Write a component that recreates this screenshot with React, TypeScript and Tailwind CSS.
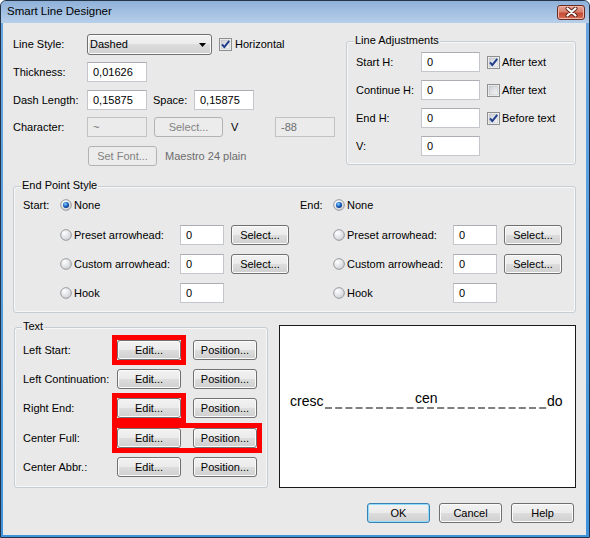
import React from "react";

// Win7 style dialog: "Smart Line Designer"

function Button({
  label,
  className = "",
  disabled = false,
  isDefault = false,
}: {
  label: string;
  className?: string;
  disabled?: boolean;
  isDefault?: boolean;
}) {
  const look = disabled
    ? "border-[#b3b3b3] bg-[#ececec] text-[#838383]"
    : isDefault
      ? "border-[#3c7fb1] bg-[linear-gradient(to_bottom,#f2f2f2_0%,#ebebeb_49%,#dddddd_50%,#cfcfcf_100%)] text-black shadow-[inset_0_0_0_1px_#8fdcfb]"
      : "border-[#707070] bg-[linear-gradient(to_bottom,#f2f2f2_0%,#ebebeb_49%,#dddddd_50%,#cfcfcf_100%)] text-black shadow-[inset_0_0_0_1px_#fbfbfb]";
  return (
    <button
      className={`flex h-[20px] shrink-0 items-center justify-center rounded-[3px] border leading-none ${look} ${className}`}
    >
      {label}
    </button>
  );
}

function Field({
  value,
  className = "",
  disabled = false,
}: {
  value: string;
  className?: string;
  disabled?: boolean;
}) {
  return (
    <div
      className={`flex h-[20px] shrink-0 items-center border pl-[5px] leading-none ${
        disabled
          ? "border-[#c2c2c2] bg-[#ebebeb] text-[#6d6d6d]"
          : "border-[#c3c7cc] border-t-[#abadb3] bg-white text-black"
      } ${className}`}
    >
      {value}
    </div>
  );
}

function Check({ checked }: { checked: boolean }) {
  return (
    <svg width="13" height="13" viewBox="0 0 13 13" className="shrink-0">
      <defs>
        <linearGradient id="cbg" x1="0" y1="0" x2="1" y2="1">
          <stop offset="0" stopColor="#cbcfd5" />
          <stop offset="1" stopColor="#f6f6f6" />
        </linearGradient>
      </defs>
      <rect x="0.5" y="0.5" width="12" height="12" fill="#fff" stroke="#8e8f8f" />
      <rect x="2" y="2" width="9" height="9" fill="url(#cbg)" stroke="#b2b4b8" strokeWidth="0.6" />
      {checked && (
        <path
          d="M3 6.3 L5.3 9.2 L10.2 2.8"
          fill="none"
          stroke="#203c8c"
          strokeWidth="1.9"
          strokeLinejoin="round"
        />
      )}
    </svg>
  );
}

function Radio({ checked = false }: { checked?: boolean }) {
  return (
    <svg width="12" height="12" viewBox="0 0 13 13" className="shrink-0">
      <defs>
        <radialGradient id="rbg" cx="0.35" cy="0.3" r="0.8">
          <stop offset="0" stopColor="#ffffff" />
          <stop offset="1" stopColor="#c9ccd1" />
        </radialGradient>
        <radialGradient id="rdot" cx="0.4" cy="0.35" r="0.7">
          <stop offset="0" stopColor="#8fd3ff" />
          <stop offset="0.55" stopColor="#1b64c4" />
          <stop offset="1" stopColor="#0b2f73" />
        </radialGradient>
      </defs>
      <circle cx="6.5" cy="6.5" r="5.8" fill="url(#rbg)" stroke="#8a8c90" strokeWidth="0.9" />
      {checked && <circle cx="6.5" cy="6.5" r="3.3" fill="url(#rdot)" />}
    </svg>
  );
}

// red annotation frame around a control, kept out of the layout by negative margins
function Marked({ children }: { children: React.ReactNode }) {
  return <div className="-m-[5px] flex border-[5px] border-[#ff0000]">{children}</div>;
}

function Group({
  title,
  className = "",
  children,
}: {
  title: string;
  className?: string;
  children: React.ReactNode;
}) {
  return (
    <div
      className={`relative rounded-[3px] border border-[#c6cdd3] shadow-[inset_0_0_0_1px_#f7f7f7] ${className}`}
    >
      <span className="absolute -top-[8px] left-[7px] bg-[#e9e9e9] px-[1px] leading-[13px]">
        {title}
      </span>
      {children}
    </div>
  );
}

function EndPoint({ label, labelClass }: { label: string; labelClass: string }) {
  return (
    <div className="flex">
      <div className={`flex h-[20px] items-center ${labelClass}`}>{label}</div>
      <div className="flex flex-col">
        <div className="flex h-[20px] items-center">
          <Radio checked />
          <span className="ml-[2px]">None</span>
        </div>
        <div className="mt-[10px] flex h-[20px] items-center">
          <Radio />
          <span className="ml-[2px] w-[106px]">Preset arrowhead:</span>
          <Field value="0" className="w-[44px]" />
          <Button label="Select..." className="ml-[7px] w-[58px]" />
        </div>
        <div className="mt-[9px] flex h-[20px] items-center">
          <Radio />
          <span className="ml-[2px] w-[106px]">Custom arrowhead:</span>
          <Field value="0" className="w-[44px]" />
          <Button label="Select..." className="ml-[7px] w-[58px]" />
        </div>
        <div className="mt-[9px] flex h-[20px] items-center">
          <Radio />
          <span className="ml-[2px] w-[106px]">Hook</span>
          <Field value="0" className="w-[44px]" />
        </div>
      </div>
    </div>
  );
}

const adjustments: { label: string; check: boolean | null; text: string }[] = [
  { label: "Start H:", check: true, text: "After text" },
  { label: "Continue H:", check: false, text: "After text" },
  { label: "End H:", check: true, text: "Before text" },
  { label: "V:", check: null, text: "" },
];

const textRows = ["Left Start:", "Left Continuation:", "Right End:", "Center Full:", "Center Abbr.:"];

export default function App() {
  return (
    <div className="flex h-[538px] w-[590px] flex-col overflow-hidden rounded-t-[6px] border border-[#243448] bg-[linear-gradient(to_bottom,#6aa6e0,#3f93db)] font-['Liberation_Sans',Arial,sans-serif] text-[11px] text-black">
      {/* title bar */}
      <div className="flex h-[22px] shrink-0 items-center bg-[linear-gradient(to_bottom,#8fb1d9,#b6cfea)] pl-[6px] pr-[4px]">
        <span className="text-[11.5px]">Smart Line Designer</span>
        <div className="ml-auto flex h-[15px] w-[28px] items-center justify-center rounded-[3px] border border-[#6a2a22] bg-[linear-gradient(to_bottom,#e8a596_0%,#d7806d_45%,#c64a33_55%,#d37058_100%)] shadow-[inset_0_0_0_1px_#f0b6a8]">
          <svg width="13" height="10" viewBox="0 0 13 10">
            <path d="M2.5 1.5 L10.5 8.5 M10.5 1.5 L2.5 8.5" stroke="#5a1f16" strokeWidth="4" strokeLinecap="round" />
            <path d="M2.5 1.5 L10.5 8.5 M10.5 1.5 L2.5 8.5" stroke="#ffffff" strokeWidth="2.2" strokeLinecap="round" />
          </svg>
        </div>
      </div>

      {/* body */}
      <div className="mb-[2px] ml-[2px] mr-[3px] flex flex-1 flex-col bg-[#e9e9e9]">
        {/* top section */}
        <div className="flex items-start px-[10px]">
          <div className="mt-[11px] flex flex-col">
            <div className="flex h-[21px] items-center">
              <span className="w-[74px]">Line Style:</span>
              <div className="flex h-[21px] w-[125px] items-center rounded-[3px] border border-[#707070] bg-[linear-gradient(to_bottom,#f2f2f2_0%,#ebebeb_49%,#dddddd_50%,#cfcfcf_100%)] pl-[2px] pr-[5px] shadow-[inset_0_0_0_1px_#fbfbfb]">
                <span>Dashed</span>
                <svg width="7" height="4" viewBox="0 0 7 4" className="ml-auto">
                  <polygon points="0,0 7,0 3.5,4" fill="#000" />
                </svg>
              </div>
              <div className="ml-[7px] flex items-center">
                <Check checked />
                <span className="ml-[3px]">Horizontal</span>
              </div>
            </div>
            <div className="mt-[7px] flex h-[20px] items-center">
              <span className="w-[74px]">Thickness:</span>
              <Field value="0,01626" className="w-[60px]" />
            </div>
            <div className="mt-[8px] flex h-[20px] items-center">
              <span className="w-[74px]">Dash Length:</span>
              <Field value="0,15875" className="w-[60px]" />
              <span className="ml-[6px] w-[41px]">Space:</span>
              <Field value="0,15875" className="w-[60px]" />
            </div>
            <div className="mt-[7px] flex h-[20px] items-center">
              <span className="w-[74px]">Character:</span>
              <Field value="~" disabled className="w-[60px]" />
              <Button label="Select..." disabled className="ml-[7px] w-[69px]" />
              <span className="ml-[8px] w-[44px]">V</span>
              <Field value="-88" disabled className="w-[60px]" />
            </div>
            <div className="mt-[9px] flex h-[20px] items-center pl-[75px]">
              <Button label="Set Font..." disabled className="w-[69px]" />
              <span className="ml-[8px] text-[#6d6d6d]">Maestro 24 plain</span>
            </div>
          </div>

          <Group title="Line Adjustments" className="ml-auto mt-[18px] w-[230px] pb-[8px] pl-[9px] pt-[10px]">
            <div className="flex flex-col gap-[8px]">
              {adjustments.map((a) => (
                <div key={a.label} className="flex h-[20px] items-center">
                  <span className="w-[65px]">{a.label}</span>
                  <Field value="0" className="w-[59px]" />
                  {a.check !== null && (
                    <div className="ml-[7px] flex items-center">
                      <Check checked={a.check} />
                      <span className="ml-[2px]">{a.text}</span>
                    </div>
                  )}
                </div>
              ))}
            </div>
          </Group>
        </div>

        {/* end point style */}
        <Group title="End Point Style" className="mx-[10px] mt-[20px] flex pb-[9px] pl-[9px] pt-[8px]">
          <div className="w-[277px]">
            <EndPoint label="Start:" labelClass="w-[37px]" />
          </div>
          <EndPoint label="End:" labelClass="w-[33px]" />
        </Group>

        {/* text + preview */}
        <div className="mt-[12px] flex items-start">
          <Group title="Text" className="ml-[11px] mt-[2px] w-[254px] pb-[10px] pl-[8px] pt-[12px]">
            <div className="flex flex-col">
              {textRows.map((r, i) => (
                <div
                  key={r}
                  className={`flex h-[20px] items-center ${i === 0 ? "" : i === 3 ? "mt-[10px]" : "mt-[9px]"}`}
                >
                  <span className="w-[94px]">{r}</span>
                  {i === 3 ? (
                    <Marked>
                      <Button label="Edit..." className="w-[64px]" />
                      <Button label="Position..." className="ml-[12px] w-[64px]" />
                    </Marked>
                  ) : (
                    <>
                      {i === 0 || i === 2 ? (
                        <Marked>
                          <Button label="Edit..." className="w-[64px]" />
                        </Marked>
                      ) : (
                        <Button label="Edit..." className="w-[64px]" />
                      )}
                      <Button label="Position..." className="ml-[12px] w-[64px]" />
                    </>
                  )}
                </div>
              ))}
            </div>
          </Group>

          <div className="ml-[11px] h-[163px] w-[297px] border border-[#1a1a1a] bg-white">
            <svg width="295" height="161" viewBox="0 0 295 161">
              <line x1="45" y1="82" x2="267" y2="82" stroke="#000" strokeWidth="1" strokeDasharray="7 3.2" />
              <text x="10" y="80" fontFamily="Liberation Sans, Arial, sans-serif" fontSize="14" fill="#000">
                cresc
              </text>
              <text x="135" y="77" fontFamily="Liberation Sans, Arial, sans-serif" fontSize="14" fill="#000">
                cen
              </text>
              <text x="267" y="80" fontFamily="Liberation Sans, Arial, sans-serif" fontSize="14" fill="#000">
                do
              </text>
            </svg>
          </div>
        </div>

        {/* dialog buttons */}
        <div className="mt-[15px] flex justify-end gap-[9px] pr-[12px]">
          <Button label="OK" isDefault className="w-[63px]" />
          <Button label="Cancel" className="w-[63px]" />
          <Button label="Help" className="w-[63px]" />
        </div>
      </div>
    </div>
  );
}
